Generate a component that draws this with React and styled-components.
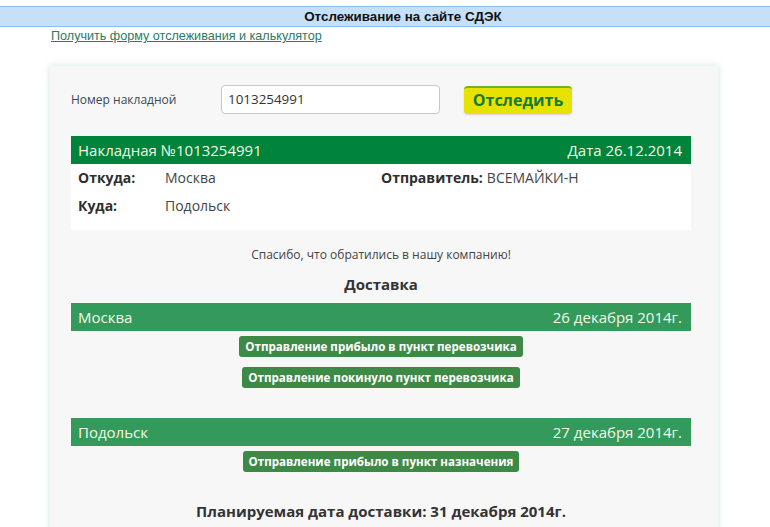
import React from "react";
import styled, { createGlobalStyle } from "styled-components";

const Global = createGlobalStyle`
  html, body { margin: 0; padding: 0; background: #fff; }
  body { font-family: "Open Sans", "Liberation Sans", Arial, sans-serif; color: #333; }
  * { box-sizing: border-box; }
`;

const Page = styled.div`
  width: 770px;
  height: 527px;
  overflow: hidden;
  padding-top: 6px;
`;

const TitleBar = styled.div`
  height: 21px;
  background: #c6e0f9;
  border-top: 1px solid #8dbde9;
  border-bottom: 1px solid #8dbde9;
  font-family: "Liberation Sans", Arial, sans-serif;
  font-weight: bold;
  font-size: 13.4px;
  line-height: 19px;
  text-align: center;
  padding-left: 36px;
  color: #111;
`;

const TopLink = styled.a`
  display: block;
  width: fit-content;
  margin: 1px 0 0 51px;
  font-family: "Liberation Sans", Arial, sans-serif;
  font-size: 12.6px;
  line-height: 16px;
  color: #2b7a64;
  text-decoration: underline;
`;

const Panel = styled.div`
  margin: 22px 0 0 50px;
  width: 668px;
  min-height: 480px;
  background: #f7f7f7;
  box-shadow: 0 0 6px 1px rgba(150, 200, 175, 0.35);
  padding: 19px 27px 0 21px;
`;

const FormRow = styled.div`
  display: flex;
  align-items: center;
  height: 29px;
`;

const Label = styled.div`
  width: 150px;
  font-size: 12px;
  color: #3b4654;
`;

const Input = styled.div`
  width: 219px;
  height: 29px;
  border: 1px solid #c8c8c8;
  border-radius: 4px;
  background: #fff;
  font-size: 13.4px;
  line-height: 27px;
  padding-left: 6px;
  color: #333;
`;

const Button = styled.div`
  margin-left: 24px;
  width: 108px;
  height: 28px;
  border-radius: 4px;
  background: #e8e200;
  border-top: 2px solid #6cb52b;
  box-shadow: 0 1px 2px rgba(0, 0, 0, 0.15);
  font-weight: bold;
  font-size: 16px;
  line-height: 25px;
  text-align: center;
  color: #137b3c;
`;

const Bar = styled.div`
  display: flex;
  justify-content: space-between;
  align-items: center;
  height: 28px;
  padding: 0 9px 0 7px;
  background: ${(p) => p.$bg};
  color: #f4f8e6;
  font-size: 15px;
  margin-top: ${(p) => p.$mt}px;
`;

const InfoBox = styled.div`
  background: #fff;
  padding: 0 7px 10px;
  display: grid;
  grid-template-columns: 1fr 1fr;
  grid-auto-rows: 28px;
  align-items: center;
  font-size: 14px;
`;

const Field = styled.div`
  display: flex;
  align-items: center;
  margin-top: -2px;
`;

const Key = styled.span`
  font-weight: bold;
  color: #2e2e2e;
  width: ${(p) => (p.$w ? p.$w + "px" : "auto")};
  margin-right: ${(p) => (p.$w ? 0 : 4)}px;
`;

const Value = styled.span`
  color: #444;
`;

const Thanks = styled.div`
  text-align: center;
  font-size: 12px;
  color: #444;
  margin-top: 17px;
  line-height: 16px;
`;

const SectionTitle = styled.div`
  text-align: center;
  font-size: 15px;
  font-weight: bold;
  color: #333;
  margin-top: 11px;
  line-height: 20px;
`;

const Events = styled.div`
  display: flex;
  flex-direction: column;
  align-items: center;
  gap: 10px;
  margin-top: 5px;
`;

const Badge = styled.div`
  height: 21px;
  padding: 0 6px;
  border-radius: 3px;
  background: #3d8a47;
  color: #fff;
  font-weight: bold;
  font-size: 11.6px;
  line-height: 21px;
  white-space: nowrap;
`;

const Planned = styled.div`
  text-align: center;
  font-size: 15px;
  font-weight: bold;
  color: #333;
  margin-top: 29px;
  line-height: 20px;
`;

export default function App() {
  return (
    <Page>
      <Global />
      <TitleBar>Отслеживание на сайте СДЭК</TitleBar>
      <TopLink href="#">Получить форму отслеживания и калькулятор</TopLink>
      <Panel>
        <FormRow>
          <Label>Номер накладной</Label>
          <Input>1013254991</Input>
          <Button>Отследить</Button>
        </FormRow>
        <Bar $bg="#00833a" $mt={22}>
          <span>Накладная №1013254991</span>
          <span>Дата 26.12.2014</span>
        </Bar>
        <InfoBox>
          <Field>
            <Key $w={87}>Откуда:</Key>
            <Value>Москва</Value>
          </Field>
          <Field>
            <Key>Отправитель:</Key>
            <Value>ВСЕМАЙКИ-Н</Value>
          </Field>
          <Field>
            <Key $w={87}>Куда:</Key>
            <Value>Подольск</Value>
          </Field>
        </InfoBox>
        <Thanks>Спасибо, что обратились в нашу компанию!</Thanks>
        <SectionTitle>Доставка</SectionTitle>
        <Bar $bg="#339a5c" $mt={9}>
          <span>Москва</span>
          <span>26 декабря 2014г.</span>
        </Bar>
        <Events>
          <Badge>Отправление прибыло в пункт перевозчика</Badge>
          <Badge>Отправление покинуло пункт перевозчика</Badge>
        </Events>
        <Bar $bg="#339a5c" $mt={30}>
          <span>Подольск</span>
          <span>27 декабря 2014г.</span>
        </Bar>
        <Events>
          <Badge>Отправление прибыло в пункт назначения</Badge>
        </Events>
        <Planned>Планируемая дата доставки: 31 декабря 2014г.</Planned>
      </Panel>
    </Page>
  );
}
